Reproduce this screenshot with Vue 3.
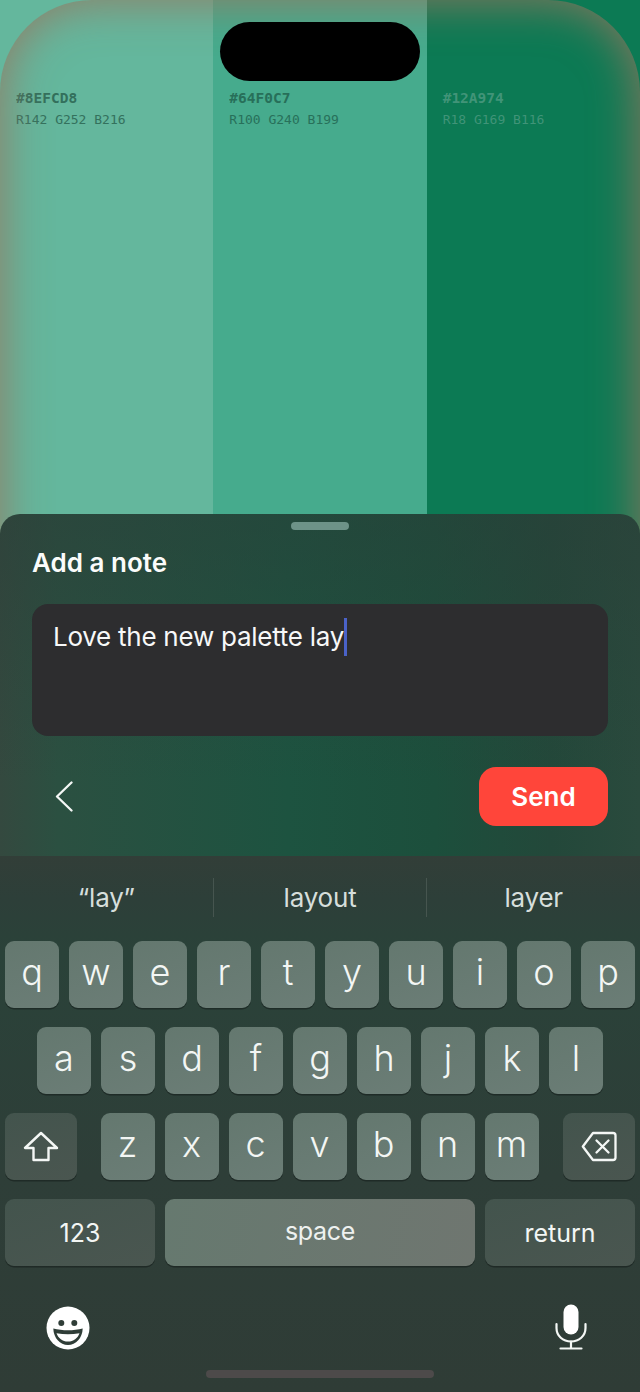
<script setup>
const swatches = [
  { hex: '#8EFCD8', rgb: 'R142 G252 B216', tone: 'light' },
  { hex: '#64F0C7', rgb: 'R100 G240 B199', tone: 'mid' },
  { hex: '#12A974', rgb: 'R18 G169 B116', tone: 'deep' },
]
const suggestions = ['“lay”', 'layout', 'layer']
const topRow = ['q', 'w', 'e', 'r', 't', 'y', 'u', 'i', 'o', 'p']
const homeRow = ['a', 's', 'd', 'f', 'g', 'h', 'j', 'k', 'l']
const lowerRow = ['z', 'x', 'c', 'v', 'b', 'n', 'm']
</script>

<template>
  <div class="phone">
    <div class="palette">
      <div v-for="s in swatches" :key="s.hex" class="swatch" :class="s.tone">
        <div class="hex">{{ s.hex }}</div>
        <div class="rgb">{{ s.rgb }}</div>
      </div>
      <div class="edge-glow"></div>
      <div class="island"></div>
    </div>

    <div class="foreground">
      <section class="sheet">
        <div class="handle"></div>
        <h2 class="title">Add a note</h2>
        <div class="field">
          <span class="typed">Love the new palette lay</span><span class="caret"></span>
        </div>
        <div class="actions">
          <svg class="chevron" width="18" height="31" viewBox="0 0 18 31" fill="none">
            <path d="M16.5 1.5 2 15.5l14.5 14" stroke="#f4f7f5" stroke-width="2.3" stroke-linecap="round" stroke-linejoin="round" />
          </svg>
          <button class="send">Send</button>
        </div>
      </section>

      <section class="keyboard">
        <div class="suggestions">
          <div v-for="w in suggestions" :key="w" class="suggestion">{{ w }}</div>
        </div>

        <div class="keys">
          <div class="row">
            <div v-for="k in topRow" :key="k" class="key">{{ k }}</div>
          </div>
          <div class="row centered">
            <div v-for="k in homeRow" :key="k" class="key">{{ k }}</div>
          </div>
          <div class="row spread">
            <div class="key fn wide">
              <svg width="36" height="31" viewBox="0 0 36 31" fill="none">
                <path d="M18 2 2 17h8.5v12h15V17H34Z" stroke="#f4f7f5" stroke-width="2.4" stroke-linejoin="round" />
              </svg>
            </div>
            <div class="letters">
              <div v-for="k in lowerRow" :key="k" class="key">{{ k }}</div>
            </div>
            <div class="key fn wide">
              <svg width="36" height="31" viewBox="0 0 36 31" fill="none">
                <path d="M12 2h20a2.5 2.5 0 0 1 2.5 2.5v22A2.5 2.5 0 0 1 32 29H12L1.8 15.5Z" stroke="#f4f7f5" stroke-width="2.3" stroke-linejoin="round" />
                <path d="m15.5 9.5 12 12m0-12-12 12" stroke="#f4f7f5" stroke-width="2.3" stroke-linecap="round" />
              </svg>
            </div>
          </div>
          <div class="row">
            <div class="key fn label num">123</div>
            <div class="key label space">space</div>
            <div class="key fn label ret">return</div>
          </div>
        </div>

        <div class="tools">
          <svg class="emoji" width="44" height="44" viewBox="0 0 44 44">
            <circle cx="22" cy="22" r="21.5" fill="#fff" />
            <circle cx="15.3" cy="17" r="3" fill="#2f3d37" />
            <circle cx="28.3" cy="17" r="3" fill="#2f3d37" />
            <path d="M7.300 22.500c9 2.400 20.400 2.400 29.400 0C36.400 32 30 39 22 39S7.600 32 7.300 22.500Z" fill="#2f3d37" />
            <path d="M10.500 27.200c7.500 1.500 15.500 1.500 23 0-1.800 5-6 8.300-11.500 8.300s-9.700-3.300-11.500-8.300Z" fill="#fff" />
          </svg>
          <svg width="32" height="46" viewBox="0 0 32 46" fill="none">
            <rect x="8.500" y="0.500" width="15" height="30" rx="7.500" fill="#fff" />
            <path d="M1.500 20v4c0 8 6.500 13.500 14.500 13.500S30.500 32 30.500 24v-4" stroke="#f4f7f5" stroke-width="2.200" stroke-linecap="round" />
            <path d="M16 37.500V44M5.500 44.500h21" stroke="#f4f7f5" stroke-width="2.200" stroke-linecap="round" />
          </svg>
        </div>

        <div class="home-bar"></div>
      </section>
    </div>
  </div>
</template>

<style>
html,
body {
  margin: 0;
  background: #2f3d37;
}
</style>

<style scoped>
.phone {
  display: grid;
  width: 640px;
  height: 1392px;
  overflow: hidden;
  font-family: Inter, "Noto Sans", sans-serif;
}

.palette,
.foreground {
  grid-area: 1 / 1;
}

/* Colour columns with the glowing screen edge on top */
.palette {
  position: relative;
  display: flex;
  overflow: hidden;
}

.swatch {
  flex: 1;
  padding: 90px 16px 0;
  font-family: "DejaVu Sans Mono", "Liberation Mono", monospace;
  color: #2f6a57;
}

.swatch.light {
  background: #64b79d;
}

.swatch.mid {
  background: #46ab8d;
  color: #256a55;
}

.swatch.deep {
  background: #0c7a54;
  color: #46977c;
}

.hex {
  font-size: 14.500px;
  font-weight: 700;
  line-height: 16px;
  opacity: 0.92;
}

.rgb {
  margin-top: 6px;
  font-size: 13px;
  line-height: 15px;
  opacity: 0.9;
}

.edge-glow {
  position: absolute;
  inset: 0;
  border-radius: 92px;
  box-shadow: inset 0 0 44px 4px rgba(150, 118, 95, 0.85);
}

.island {
  position: absolute;
  top: 22px;
  left: 220px;
  width: 200px;
  height: 59px;
  border-radius: 29.500px;
  background: #000;
}

.foreground {
  position: relative;
  display: flex;
  flex-direction: column;
  justify-content: flex-end;
}

/* Note sheet */
.sheet {
  display: flex;
  flex-direction: column;
  height: 342px;
  box-sizing: border-box;
  padding: 8px 32px 0;
  border-radius: 20px 20px 0 0;
  background:
    linear-gradient(180deg, rgba(42, 62, 56, 0.5), rgba(42, 62, 56, 0) 78%),
    linear-gradient(90deg, #34493f 0, #2b5041 9%, #1d5340 45%, #1c4f3c 68%, #23483a 86%, #2a4a3d 100%);
}

.handle {
  align-self: center;
  width: 58px;
  height: 8px;
  border-radius: 4px;
  background: #6d9388;
}

.title {
  margin: 17px 0 0;
  font-size: 26px;
  font-weight: 600;
  line-height: 32px;
  color: #fbfcfb;
}

.field {
  display: flex;
  align-items: flex-start;
  height: 132px;
  box-sizing: border-box;
  margin-top: 25px;
  padding: 14px 21px;
  border-radius: 16px;
  background: #2d2d2f;
}

.typed {
  font-size: 26px;
  line-height: 38px;
  letter-spacing: -0.26px;
  color: #f7f8f8;
}

.caret {
  width: 3px;
  height: 38px;
  background: #4a62c8;
}

.actions {
  display: flex;
  align-items: center;
  justify-content: space-between;
  margin-top: 31px;
  padding-left: 23px;
}

.send {
  width: 129px;
  height: 59px;
  border: 0;
  border-radius: 17px;
  background: #ff453a;
  font-family: inherit;
  font-size: 26px;
  font-weight: 600;
  color: #fff;
}

/* Keyboard */
.keyboard {
  display: flex;
  flex-direction: column;
  height: 536px;
  box-sizing: border-box;
  background: linear-gradient(180deg, #323e38 0, #2d3f39 8%, #2a4239 18%, #2e3e38 60%, #2f3c36 100%);
}

.suggestions {
  display: flex;
  height: 85px;
  align-items: center;
}

.suggestion {
  flex: 1;
  height: 39px;
  margin-top: -2px;
  font-size: 26px;
  line-height: 39px;
  letter-spacing: -0.2px;
  text-align: center;
  color: #d6dedb;
}

.suggestion + .suggestion {
  border-left: 1px solid #46554f;
}

.keys {
  display: flex;
  flex-direction: column;
  gap: 19px;
  padding: 0 5px;
}

.row,
.letters {
  display: flex;
  gap: 10px;
}

.row.centered {
  justify-content: center;
}

.row.spread {
  justify-content: space-between;
}

.letters {
  margin-right: 1px;
}

.key {
  display: flex;
  align-items: center;
  justify-content: center;
  width: 54px;
  height: 67px;
  box-sizing: border-box;
  padding-bottom: 6px;
  border-radius: 9px;
  background: linear-gradient(160deg, #64786f, #6b7d76);
  box-shadow: 0 1.500px 0 rgba(20, 28, 25, 0.55);
  font-size: 36px;
  font-weight: 300;
  color: #f3f6f4;
}

.key.fn {
  background: linear-gradient(160deg, #43544d, #4a5650);
}

.key.wide {
  width: 72px;
  padding-bottom: 0;
}

.key.label {
  padding-bottom: 0;
  font-size: 25px;
  font-weight: 400;
}

.key.num {
  width: 150px;
}

.key.space {
  flex: 1;
  padding-bottom: 4px;
  letter-spacing: -0.3px;
  background: linear-gradient(100deg, #66796f, #6f7670);
  color: #eef1ef;
}

.key.ret {
  width: 150px;
}

.tools {
  display: flex;
  align-items: center;
  justify-content: space-between;
  margin-top: 38px;
  padding: 0 53px 0 46px;
}

.emoji {
  margin-top: 2px;
}

.home-bar {
  align-self: center;
  width: 228px;
  height: 8px;
  margin-top: 20px;
  border-radius: 4px;
  background: #4d4a4a;
}
</style>
